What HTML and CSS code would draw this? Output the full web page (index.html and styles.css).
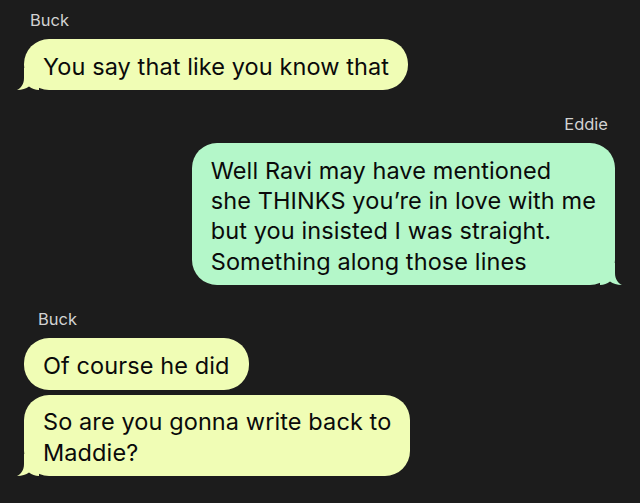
FILE: index.html
```html
<!DOCTYPE html>
<html>
<head>
<meta charset="utf-8">
<link rel="stylesheet" href="styles.css">
</head>
<body>
<div class="chat">
  <div class="group left first">
    <div class="name">Buck</div>
    <div class="bubble yellow tail">
      You say that like you know that
      <svg class="tail-svg" viewBox="0 0 22 22" width="22" height="22"><path d="M7,0 L7,10 C7,16 4,20 0,22 C5,22 9,20.5 12,18.5 C15,20.5 18,22 22,22 L22,0 Z"/></svg>
    </div>
  </div>
  <div class="group right">
    <div class="name">Eddie</div>
    <div class="bubble green tail">
      Well Ravi may have mentioned<br>she THINKS you’re in love with me<br>but you insisted I was straight.<br>Something along those lines
      <svg class="tail-svg" viewBox="0 0 22 22" width="22" height="22"><path d="M7,0 L7,10 C7,16 4,20 0,22 C5,22 9,20.5 12,18.5 C15,20.5 18,22 22,22 L22,0 Z"/></svg>
    </div>
  </div>
  <div class="group left">
    <div class="name">Buck</div>
    <div class="bubble yellow">Of course he did</div>
    <div class="bubble yellow tail">
      So are you gonna write back to<br>Maddie?
      <svg class="tail-svg" viewBox="0 0 22 22" width="22" height="22"><path d="M7,0 L7,10 C7,16 4,20 0,22 C5,22 9,20.5 12,18.5 C15,20.5 18,22 22,22 L22,0 Z"/></svg>
    </div>
  </div>
</div>
</body>
</html>
```

FILE: styles.css
```css
html, body {
  margin: 0;
  padding: 0;
  background: #1c1c1c;
}
body {
  font-family: Inter, "Noto Sans", sans-serif;
  width: 640px;
  height: 503px;
  overflow: hidden;
}
.chat {
  display: flex;
  flex-direction: column;
  padding: 9px 0 0 0;
}
.group {
  display: flex;
  flex-direction: column;
  gap: 5px;
  margin-bottom: 23px;
}
.group.left {
  align-items: flex-start;
  padding-left: 24px;
}
.group.right {
  align-items: flex-end;
  padding-right: 25px;
}
.name {
  font-size: 16.5px;
  line-height: 22px;
  color: #d2d2d2;
  padding: 0 6px;
  margin-bottom: 3px;
}
.group.right .name {
  padding: 0 7px;
}
.group.left.first .name { padding-left: 6px; }
.group.left:not(.first) .name { padding-left: 14px; }
.bubble {
  position: relative;
  font-size: 23.5px;
  line-height: 30.3px;
  letter-spacing: 0.1px;
  color: #0a0a0a;
  padding: 12.5px 19px 8.5px 19px;
  border-radius: 25px;
}
.yellow { background: #f0fdb5; fill: #f0fdb5; }
.green { background: #b4f7c9; fill: #b4f7c9; }
.tail-svg {
  position: absolute;
  bottom: 0;
  left: -7px;
}
.group.right .tail-svg {
  left: auto;
  right: -7px;
  transform: scaleX(-1);
}
```
